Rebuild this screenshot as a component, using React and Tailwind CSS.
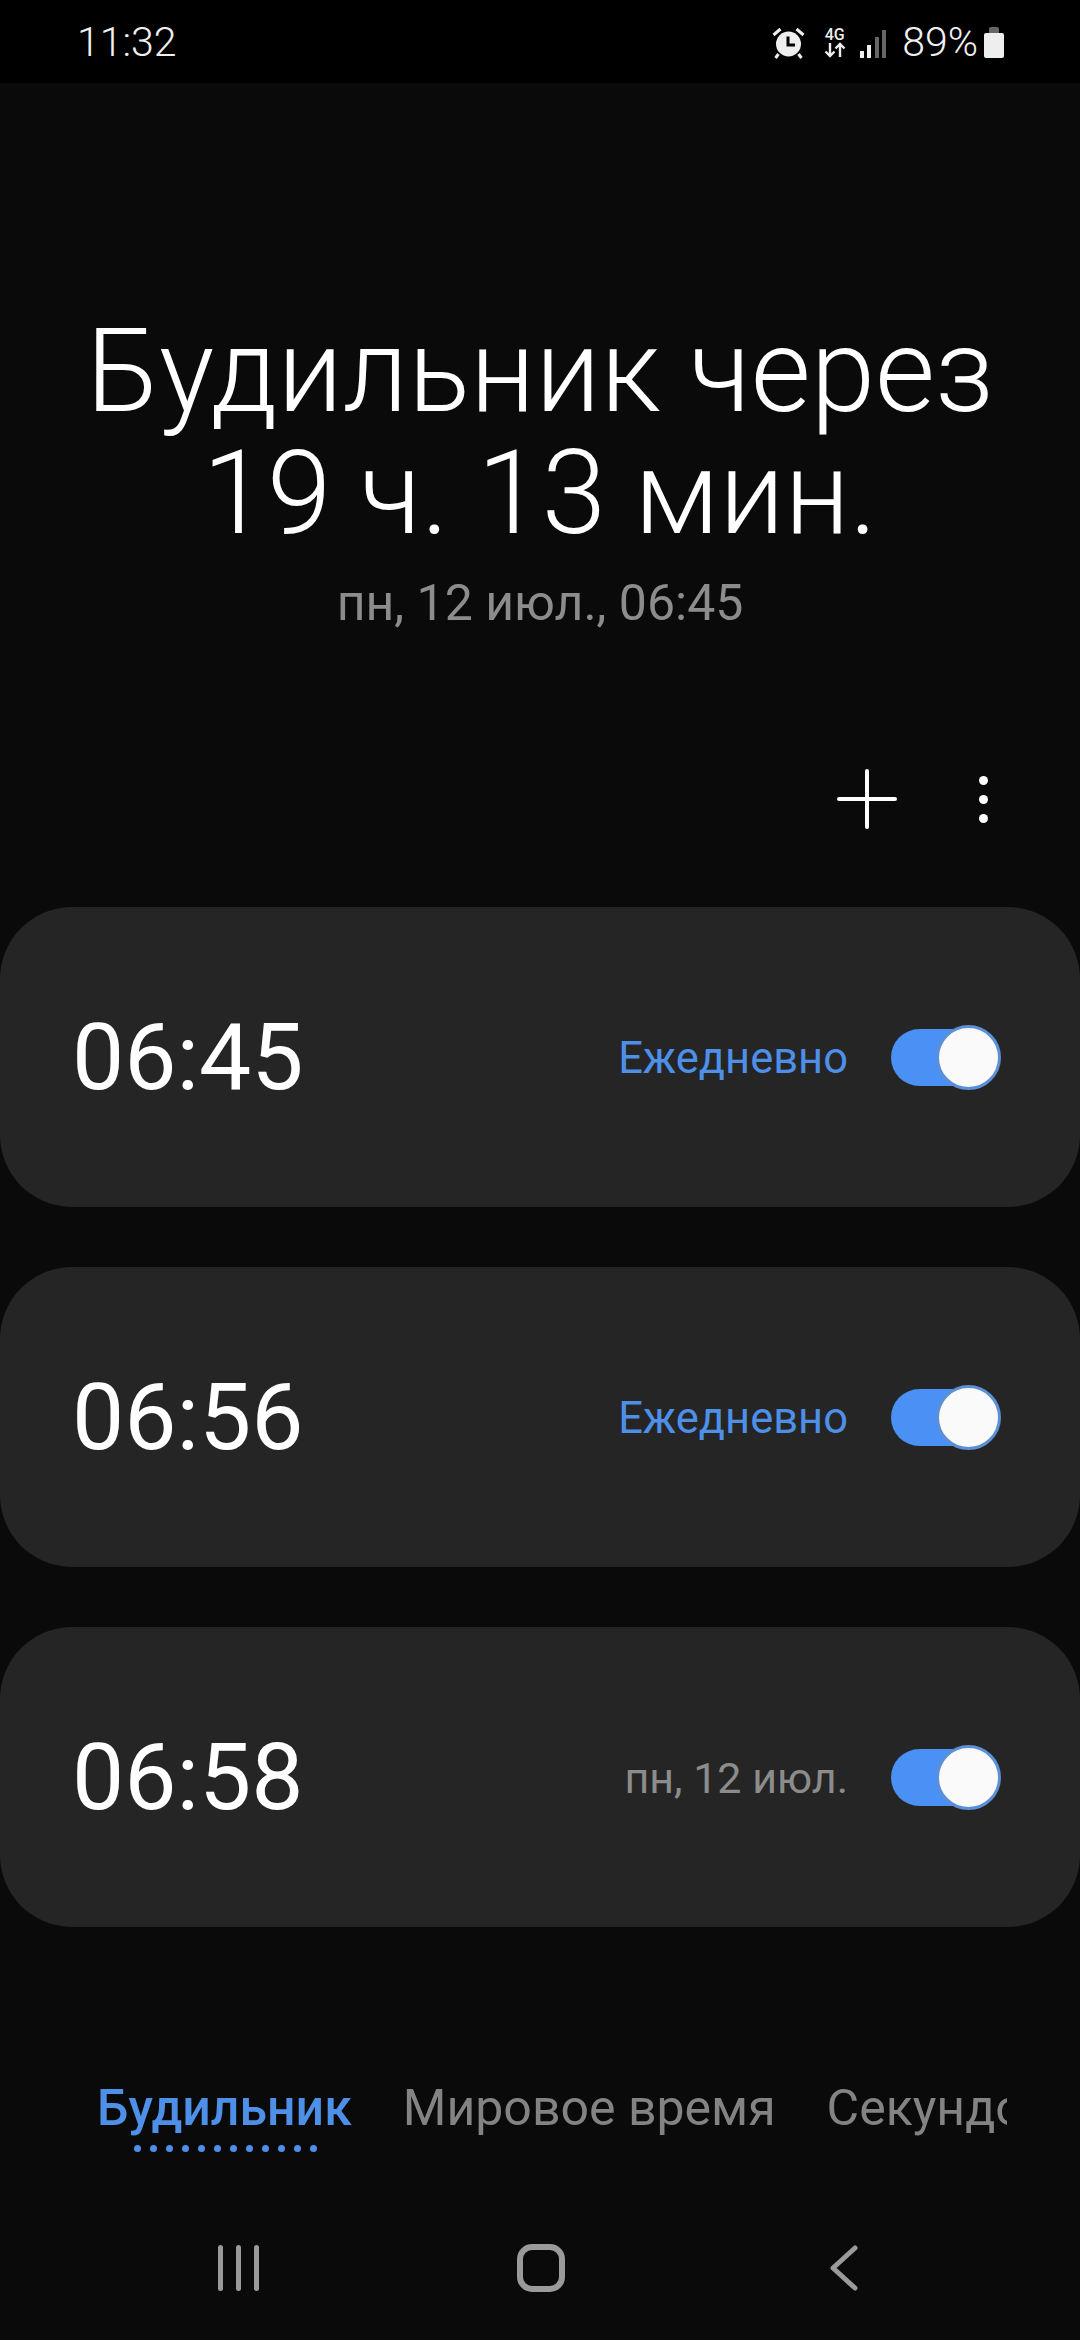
import { Plus } from "lucide-react";

function AlarmIcon() {
  return (
    <svg width="33" height="32" viewBox="0 0 32 32" className="mr-[19px]">
      <circle cx="16" cy="17" r="12.5" fill="#eee" />
      <path d="M15.5 9.5v8.5h7" fill="none" stroke="#000" strokeWidth="3" />
      <path d="M1 8l7-6M31 8l-7-6M6 27l-3 4M26 27l3 4" stroke="#eee" strokeWidth="3" />
    </svg>
  );
}

function NetworkIcon() {
  return (
    <div className="mr-[14px] flex w-[22px] flex-col items-center">
      <span className="text-[16px] leading-[15px] font-medium text-[#eee]">4G</span>
      <svg width="22" height="16" viewBox="0 0 22 16">
        <path d="M6 1v13M1.5 9.5L6 14l4.500-4.500" fill="none" stroke="#eee" strokeWidth="2.4" />
        <path d="M16 15V2M11.500 6.500L16 2l4.500 4.500" fill="none" stroke="#eee" strokeWidth="2.4" />
      </svg>
    </div>
  );
}

function SignalIcon() {
  return (
    <div className="mr-[16px] flex h-[30px] items-end gap-[3.500px]">
      <div className="h-[7px] w-[4px] bg-[#eee]" />
      <div className="h-[13px] w-[4px] bg-[#eee]" />
      <div className="h-[21px] w-[4px] bg-[#666]" />
      <div className="h-[28px] w-[4px] bg-[#666]" />
    </div>
  );
}

function StatusBar() {
  return (
    <div className="flex h-[83px] items-center justify-between bg-black pt-[2px] pr-[76px] pl-[77px]">
      <span className="text-[41px] leading-none font-light text-[#f0f0f0]">11:32</span>
      <div className="flex items-center">
        <AlarmIcon />
        <NetworkIcon />
        <SignalIcon />
        <span className="mr-[6px] text-[41px] leading-none font-light text-[#f0f0f0]">89%</span>
        <div className="flex flex-col items-center">
          <div className="h-[6px] w-[10px] rounded-t-[2px] bg-[#666]" />
          <div className="h-[25px] w-[20px] rounded-[2px] bg-[#eee]" />
        </div>
      </div>
    </div>
  );
}

function Toggle() {
  return (
    <div className="relative h-[57px] w-[107px] rounded-full bg-[#4a90f5]">
      <div className="absolute top-[-4px] right-[-3px] h-[65px] w-[65px] rounded-full border-[3px] border-[#5b8fd6] bg-[#fafafa]" />
    </div>
  );
}

function AlarmCard({ time, label, active }) {
  return (
    <div className="flex h-[300px] items-center justify-between rounded-[72px] bg-[#252525] pr-[82px] pl-[72px]">
      <span className="text-[93px] leading-none text-white">{time}</span>
      <div className="flex items-center gap-[43px]">
        <span className={active ? "pt-[3px] text-[43.500px] text-[#4e8fe8]" : "pt-[3px] text-[43px] text-[#8c8c8c]"}>
          {label}
        </span>
        <Toggle />
      </div>
    </div>
  );
}

function TabBar() {
  return (
    <div className="mt-[146px] mr-[73px] ml-[97px] flex h-[90px] gap-[51px] overflow-hidden whitespace-nowrap">
      <div className="relative">
        <span className="text-[50px] leading-[70px] font-medium text-[#4e8fe8]">Будильник</span>
        <div className="absolute top-[72px] left-[37px] flex gap-[9.500px]">
          {Array.from({ length: 12 }).map((_, i) => (
            <div key={i} className="h-[6.500px] w-[6.500px] rounded-full bg-[#4e8fe8]" />
          ))}
        </div>
      </div>
      <span className="text-[50px] leading-[70px] text-[#838383]">Мировое время</span>
      <span className="text-[50px] leading-[70px] text-[#838383]">Секундомер</span>
    </div>
  );
}

function NavBar() {
  return (
    <div className="mt-[81px] flex items-center pl-[218px]">
      <div className="mr-[258px] flex gap-[13px]">
        <div className="h-[46px] w-[5px] rounded-full bg-[#9a9a9a]" />
        <div className="h-[46px] w-[5px] rounded-full bg-[#9a9a9a]" />
        <div className="h-[46px] w-[5px] rounded-full bg-[#9a9a9a]" />
      </div>
      <div className="mr-[265px] h-[48px] w-[48px] rounded-[15px] border-[6px] border-[#9a9a9a]" />
      <svg width="28" height="48" viewBox="0 0 28 48">
        <path d="M25 4L3 24l22 20" fill="none" stroke="#9a9a9a" strokeWidth="5" strokeLinecap="round" strokeLinejoin="round" />
      </svg>
    </div>
  );
}

export default function App() {
  return (
    <div className="h-[2340px] w-[1080px] overflow-hidden bg-[#0a0a0a] font-['Roboto',sans-serif]">
      <StatusBar />

      <div className="mt-[227px] text-center">
        <h1 className="text-[116px] leading-[122px] font-light text-white">
          Будильник через
          <br />
          19 ч. 13 мин.
        </h1>
        <p className="mt-[19px] text-[50px] leading-[60px] text-[#8c8c8c]">пн, 12 июл., 06:45</p>
      </div>

      <div className="mt-[136px] mb-[78px] flex h-[60px] items-center justify-end pr-[92px]">
        <Plus className="mr-[64px] h-[96px] w-[96px] text-white" strokeWidth={1} />
        <div className="flex flex-col gap-[10px]">
          <div className="h-[9px] w-[9px] rounded-full bg-white" />
          <div className="h-[9px] w-[9px] rounded-full bg-white" />
          <div className="h-[9px] w-[9px] rounded-full bg-white" />
        </div>
      </div>

      <div className="flex flex-col gap-[60px]">
        <AlarmCard time="06:45" label="Ежедневно" active />
        <AlarmCard time="06:56" label="Ежедневно" active />
        <AlarmCard time="06:58" label="пн, 12 июл." />
      </div>

      <TabBar />
      <NavBar />
    </div>
  );
}
